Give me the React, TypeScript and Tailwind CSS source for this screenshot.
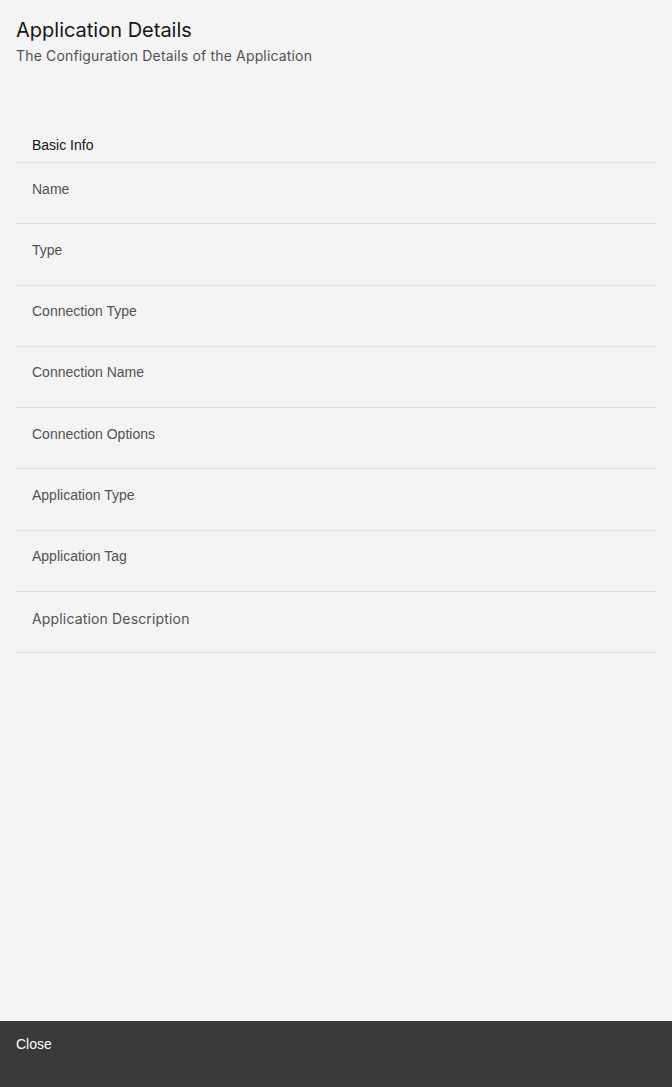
import React from "react";

const rows = [
  "Name",
  "Type",
  "Connection Type",
  "Connection Name",
  "Connection Options",
  "Application Type",
  "Application Tag",
];

export default function App() {
  return (
    <div className="flex h-[1087px] w-full flex-col bg-[#f4f4f4]">
      <div className="flex-1 px-4">
        <div className="pt-[18px]">
          <h1
            className="text-[20px] leading-6 text-[#161616]"
            style={{ fontFamily: "Inter, 'Liberation Sans', sans-serif" }}
          >
            Application Details
          </h1>
          <p
            className="mt-[4px] text-[14px] leading-5 tracking-[0.16px] text-[#525252]"
            style={{ fontFamily: "Inter, 'Liberation Sans', sans-serif" }}
          >
            The Configuration Details of the Application
          </p>
        </div>
        <div
          className="mt-[69px]"
          style={{ fontFamily: "'Liberation Sans', Arial, sans-serif" }}
        >
          <div className="border-b border-[#e0e0e0] px-4 pb-[7px] text-[14px] leading-5 text-[#161616]">
            Basic Info
          </div>
          {rows.map((r) => (
            <div
              key={r}
              className="border-b border-[#e0e0e0] px-4 pt-[15.5px] pb-[24.75px] text-[14px] leading-5 text-[#525252]"
            >
              {r}
            </div>
          ))}
          <div
            className="border-b border-[#e0e0e0] px-4 pt-[17px] pb-[23.25px] text-[14px] leading-5 tracking-[0.16px] text-[#525252]"
            style={{ fontFamily: "Inter, 'Liberation Sans', sans-serif" }}
          >
            Application Description
          </div>
        </div>
      </div>
      <div
        className="h-[66px] bg-[#393939] px-4 pt-[14px] text-[14px] leading-[18px] text-white"
        style={{ fontFamily: "'Liberation Sans', Arial, sans-serif" }}
      >
        Close
      </div>
    </div>
  );
}
